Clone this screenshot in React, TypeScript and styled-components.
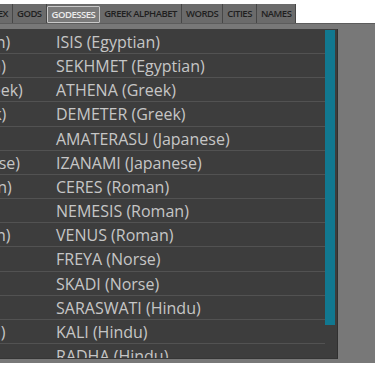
import React from 'react';
import styled, { createGlobalStyle } from 'styled-components';

const GlobalStyle = createGlobalStyle`
  html, body {
    margin: 0;
    padding: 0;
    background: #ffffff;
    font-family: "Open Sans", "Noto Sans", sans-serif;
  }
`;

const Page = styled.div`
  display: flex;
  flex-direction: column;
  width: 375px;
  height: 375px;
  overflow: hidden;
  padding-top: 4px;
  box-sizing: border-box;
`;

const TabStrip = styled.nav`
  display: flex;
  width: 296px;
  overflow: hidden;
  height: 19px;
  background: #6b6b6b;
`;

const TabRow = styled.div`
  display: flex;
  margin-left: -22px;
`;

const Tab = styled.div<{ active?: boolean }>`
  display: flex;
  align-items: center;
  padding: 0 4px;
  font-size: 9.5px;
  font-weight: 600;
  letter-spacing: -0.5px;
  white-space: nowrap;
  box-sizing: border-box;
  color: ${({ active }) => (active ? '#ececec' : '#1f1f1f')};
  background: ${({ active }) => (active ? '#7a7a7a' : 'transparent')};
  border-right: 1px solid #474747;
  ${({ active }) =>
    active &&
    `border: 1px solid #c9c9c9; margin-top: 2px; height: 17px; border-radius: 1px;`}
`;

const Stage = styled.section`
  display: flex;
  background: #787878;
  border-top: 1px solid #5c5c5c;
  padding: 5px 37px 4px 0;
`;

const Panel = styled.div`
  display: flex;
  flex: 1;
  height: 330px;
  background: #3d3d3d;
  border-right: 1px solid #303030;
  border-bottom: 1px solid #353535;
  box-sizing: border-box;
  overflow: hidden;
`;

const ListViewport = styled.div`
  flex: 1;
  overflow: hidden;
  padding-top: 1px;
`;

// list is scrolled sideways, so the first column is mostly out of view
const Rows = styled.div`
  margin-left: -98px;
`;

const Row = styled.div`
  display: grid;
  grid-template-columns: 154px 1fr;
  height: 24.17px;
  line-height: 23.17px;
  border-bottom: 1px solid #525252;
  box-sizing: border-box;
  font-size: 16px;
  color: #c6c6c6;
  white-space: nowrap;
`;

const Cell = styled.span`
  padding-top: 1px;
`;

const ScrollTrack = styled.div`
  width: 11px;
  padding: 1px 1px 0 0;
`;

const Thumb = styled.div`
  width: 10px;
  height: 295px;
  background: #117890;
`;

const tabs = ['INDEX', 'GODS', 'GODESSES', 'GREEK ALPHABET', 'WORDS', 'CITIES', 'NAMES'];

const rows: [string, string][] = [
  ['GEB (Egyptian)', 'ISIS (Egyptian)'],
  ['SET (Egyptian)', 'SEKHMET (Egyptian)'],
  ['HERMES (Greek)', 'ATHENA (Greek)'],
  ['ATLAS (Greek)', 'DEMETER (Greek)'],
  ['SOL (Roman)', 'AMATERASU (Japanese)'],
  ['SHIN (Japanese)', 'IZANAMI (Japanese)'],
  ['MARS (Roman)', 'CERES (Roman)'],
  ['VALI (Norse)', 'NEMESIS (Roman)'],
  ['LIBER (Roman)', 'VENUS (Roman)'],
  ['LOKI (Norse)', 'FREYA (Norse)'],
  ['TYR (Norse)', 'SKADI (Norse)'],
  ['AGNI (Hindu)', 'SARASWATI (Hindu)'],
  ['RAMA (Hindu)', 'KALI (Hindu)'],
  ['RAVI (Hindu)', 'RADHA (Hindu)'],
];

const App: React.FC = () => {
  return (
    <>
      <GlobalStyle />
      <Page>
        <TabStrip>
          <TabRow>
            {tabs.map((t) => (
              <Tab key={t} active={t === 'GODESSES'}>{t}</Tab>
            ))}
          </TabRow>
        </TabStrip>
        <Stage>
          <Panel>
            <ListViewport>
              <Rows>
                {rows.map(([god, goddess]) => (
                  <Row key={goddess}>
                    <Cell>{god}</Cell>
                    <Cell>{goddess}</Cell>
                  </Row>
                ))}
              </Rows>
            </ListViewport>
            <ScrollTrack>
              <Thumb />
            </ScrollTrack>
          </Panel>
        </Stage>
      </Page>
    </>
  );
};

export default App;
